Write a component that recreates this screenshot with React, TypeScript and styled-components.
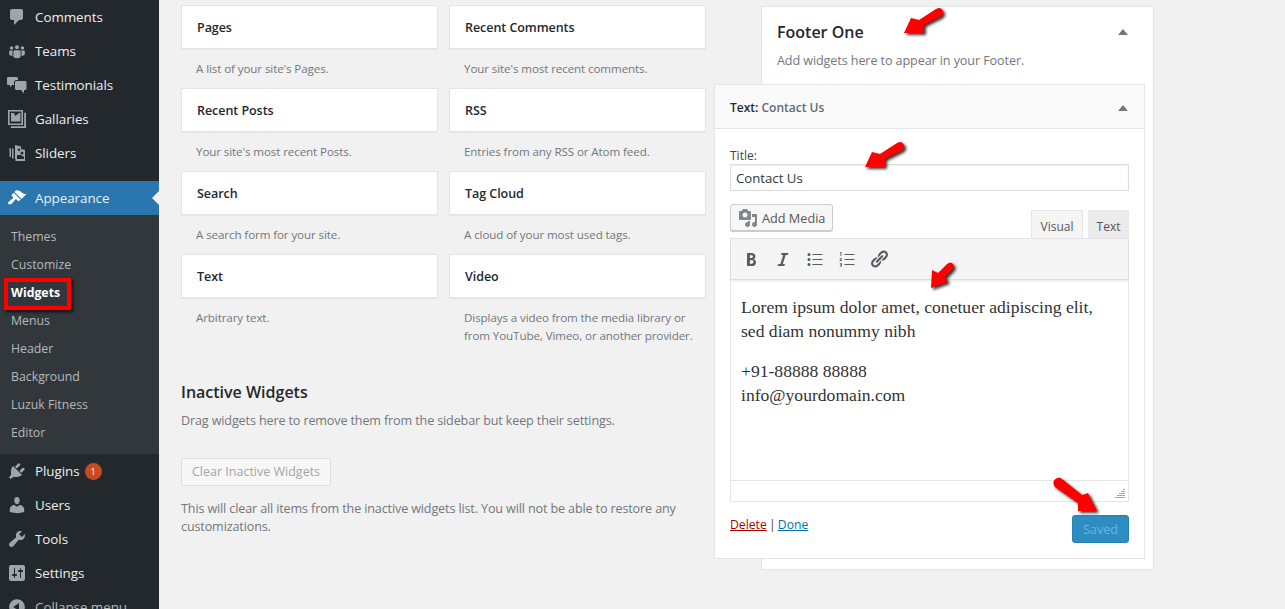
import React from 'react';
import styled, { createGlobalStyle } from 'styled-components';

const GlobalStyle = createGlobalStyle`
    html, body {
        margin: 0;
        padding: 0;
        height: 609px;
        overflow: hidden;
        background: #f1f1f1;
    }
    body {
        font-family: 'Open Sans', sans-serif;
        font-size: 13px;
        line-height: 18px;
        color: #444;
    }
`;

const Page = styled.div`
    position: relative;
    display: flex;
    width: 1285px;
    height: 609px;
    overflow: hidden;
`;

const Sidebar = styled.nav`
    width: 159px;
    flex: none;
    background: #23282d;
    overflow: hidden;
`;

const MenuItem = styled.div<{ $active?: boolean; $dim?: boolean }>`
    position: relative;
    display: flex;
    align-items: center;
    height: 34px;
    padding-left: 7px;
    font-size: 13.4px;
    letter-spacing: -0.05px;
    color: ${(p) => (p.$dim ? '#b4b9be' : '#eee')};
    background: ${(p) => (p.$active ? '#2a76af' : 'transparent')};
    ${(p) =>
        p.$active
            ? `&::after {
        content: '';
        position: absolute;
        right: 0;
        top: 10px;
        border: 7px solid transparent;
        border-right-color: #f1f1f1;
        border-left-width: 0;
    }`
            : ''}
`;

const MenuIcon = styled.svg<{ $light?: boolean }>`
    width: 20px;
    height: 20px;
    flex: none;
    margin-right: 8px;
    fill: ${(p) => (p.$light ? '#fff' : '#a0a5aa')};
    fill-rule: evenodd;
`;

const MenuGap = styled.div`
    height: 11px;
`;

const SubMenu = styled.div`
    background: #32373c;
    padding: 8px 0 7px;
    height: 239px;
    box-sizing: border-box;
`;

const SubItem = styled.div<{ $current?: boolean }>`
    height: 28px;
    line-height: 28px;
    padding-left: 11px;
    font-size: 12.3px;
    color: ${(p) => (p.$current ? '#fff' : '#b4b9be')};
    font-weight: ${(p) => (p.$current ? 700 : 400)};
`;

const Badge = styled.span`
    display: inline-block;
    width: 17px;
    height: 17px;
    line-height: 17px;
    margin-left: 5px;
    border-radius: 50%;
    background: #ca4a1f;
    color: #fff;
    font-size: 9px;
    text-align: center;
`;

const Highlight = styled.div`
    position: absolute;
    left: 4px;
    top: 278px;
    width: 59px;
    height: 24px;
    border: 4px solid #f00;
    box-shadow: 2px 2px 3px rgba(0, 0, 0, 0.7);
`;

const Available = styled.section`
    width: 525px;
    margin-left: 22px;
    padding-top: 5px;
    flex: none;
`;

const WidgetGrid = styled.div`
    display: grid;
    grid-template-columns: 257px 257px;
    column-gap: 11px;
    grid-auto-rows: 83px;
`;

const WidgetTile = styled.div`
    display: flex;
    flex-direction: column;
`;

const TileTitle = styled.div`
    height: 42px;
    line-height: 44px;
    padding-left: 15px;
    background: #fff;
    border: 1px solid #e5e5e5;
    box-shadow: 0 1px 1px rgba(0, 0, 0, 0.04);
    font-size: 12.5px;
    letter-spacing: -0.05px;
    font-weight: 600;
    color: #23282d;
`;

const TileDesc = styled.div`
    margin-top: 11px;
    padding-left: 15px;
    font-size: 11.6px;
    letter-spacing: -0.1px;
    line-height: 18px;
    color: #72777c;
`;

const Heading = styled.h3`
    margin: 43px 0 0;
    font-size: 16px;
    line-height: 24px;
    font-weight: 600;
    color: #23282d;
`;

const Note = styled.p<{ $top: number }>`
    margin: ${(p) => p.$top}px 0 0;
    font-size: 12.6px;
    letter-spacing: -0.14px;
    line-height: 18px;
    color: #72777c;
`;

const ClearButton = styled.div`
    width: 150px;
    height: 28px;
    margin-top: 28px;
    box-sizing: border-box;
    line-height: 26px;
    text-align: center;
    border: 1px solid #ddd;
    border-radius: 2px;
    background: #f7f7f7;
    color: #a0a5aa;
    font-size: 12.5px;
`;

const Sidebars = styled.section`
    width: 393px;
    height: 564px;
    margin: 6px 0 0 55px;
    box-sizing: border-box;
    flex: none;
    background: #fff;
    border: 1px solid #e5e5e5;
`;

const PanelHead = styled.div`
    display: flex;
    justify-content: space-between;
    align-items: center;
    height: 50px;
    padding: 0 25px 0 15px;
`;

const PanelTitle = styled.h2`
    margin: 0;
    font-size: 16px;
    font-weight: 600;
    color: #23282d;
`;

const Caret = styled.span`
    width: 0;
    height: 0;
    border-left: 5px solid transparent;
    border-right: 5px solid transparent;
    border-bottom: 6px solid #72777c;
`;

const PanelDesc = styled.p`
    margin: -5px 0 0;
    padding-left: 15px;
    font-size: 12.6px;
    letter-spacing: -0.1px;
    line-height: 18px;
    color: #72777c;
`;

const OpenWidget = styled.div`
    width: 431px;
    height: 475px;
    margin: 14px 0 0 -48px;
    box-sizing: border-box;
    background: #fff;
    border: 1px solid #e5e5e5;
`;

const WidgetHead = styled.div`
    display: flex;
    justify-content: space-between;
    align-items: center;
    height: 44px;
    padding: 2px 16px 0 15px;
    box-sizing: border-box;
    background: #fafafa;
    border-bottom: 1px solid #e5e5e5;
    font-size: 12px;
    font-weight: 600;
    color: #23282d;
`;

const WidgetName = styled.span`
    color: #606a73;
`;

const WidgetBody = styled.div`
    padding: 18px 15px 0;
`;

const Label = styled.label`
    display: block;
    font-size: 12px;
    line-height: 17px;
    color: #444;
`;

const TitleInput = styled.div`
    height: 27px;
    box-sizing: border-box;
    padding-left: 5px;
    line-height: 27px;
    font-size: 13.2px;
    border: 1px solid #ddd;
    box-shadow: inset 0 1px 2px rgba(0, 0, 0, 0.07);
    color: #32373c;
`;

const EditorTools = styled.div`
    display: flex;
    justify-content: space-between;
    align-items: flex-end;
    margin-top: 13px;
    height: 34px;
`;

const MediaButton = styled.div`
    display: flex;
    align-items: center;
    align-self: flex-start;
    box-sizing: border-box;
    width: 103px;
    height: 27px;
    padding-left: 7px;
    gap: 4px;
    border: 1px solid #ccc;
    border-radius: 3px;
    background: #f7f7f7;
    box-shadow: 0 1px 0 #ccc;
    font-size: 12.7px;
    color: #555;
`;

const MediaIcon = styled.svg`
    width: 20px;
    height: 20px;
    flex: none;
    fill: #82878c;
`;

const Tabs = styled.div`
    display: flex;
    gap: 5px;
`;

const Tab = styled.div<{ $active?: boolean }>`
    position: relative;
    width: ${(p) => (p.$active ? '52px' : '41px')};
    height: 28px;
    box-sizing: border-box;
    line-height: 31px;
    text-align: center;
    font-size: 12px;
    color: #555;
    background: ${(p) => (p.$active ? '#f5f5f5' : '#ebebeb')};
    border: 1px solid ${(p) => (p.$active ? '#e5e5e5' : '#ebebeb')};
    border-bottom: none;
    margin-bottom: ${(p) => (p.$active ? '-1px' : '0')};
`;

const Editor = styled.div`
    border: 1px solid #e5e5e5;
`;

const Toolbar = styled.div`
    display: flex;
    align-items: center;
    gap: 12px;
    height: 40px;
    padding-left: 10px;
    background: #f5f5f5;
    border-bottom: 1px solid #ddd;
    box-shadow: 0 1px 2px rgba(0, 0, 0, 0.1);
`;

const ToolIcon = styled.svg`
    width: 20px;
    height: 20px;
    fill: #555d66;
`;

const EditorBody = styled.div`
    height: 200px;
    box-sizing: border-box;
    padding: 15px 10px 0;
    font-family: 'Liberation Serif', serif;
    font-size: 17.6px;
    line-height: 24px;
    color: #333;
`;

const EditorPara = styled.p`
    margin: 0 0 16px;
`;

const StatusBar = styled.div`
    position: relative;
    height: 20px;
    border-top: 1px solid #e5e5e5;
`;

const Grip = styled.svg`
    position: absolute;
    right: 3px;
    bottom: 3px;
    width: 10px;
    height: 10px;
    stroke: #a0a5aa;
`;

const Actions = styled.div`
    display: flex;
    justify-content: space-between;
    margin-top: 13px;
`;

const LinkRow = styled.div`
    padding-top: 1px;
    font-size: 12.2px;
    word-spacing: -1px;
`;

const DeleteLink = styled.a`
    color: #a00;
    text-decoration: underline;
`;

const DoneLink = styled.a`
    color: #0073aa;
    text-decoration: underline;
`;

const SavedButton = styled.div`
    width: 57px;
    height: 28px;
    box-sizing: border-box;
    line-height: 26px;
    text-align: center;
    background: #2e8cc3;
    border: 1px solid #2a7fb3;
    border-radius: 3px;
    color: #66b5de;
    font-size: 12.7px;
`;

const ArrowSvg = styled.svg<{ $x: number; $y: number }>`
    position: absolute;
    left: ${(p) => p.$x}px;
    top: ${(p) => p.$y}px;
    width: 50px;
    height: 45px;
    overflow: visible;
    fill: #f00;
    filter: drop-shadow(2.5px 2.5px 1.5px rgba(0, 0, 0, 0.8));
`;

const WIDE_ARROW = 'M4 28 L11 13 L19 15 L36 4 Q41 1 43 6 Q44 10 40 12 L24 20 L24 28 Z';

// each arrow sits over the page, so these are canvas positions
const ARROWS = [
    { x: 900, y: 5, d: WIDE_ARROW },
    { x: 861, y: 139, d: WIDE_ARROW },
    { x: 925, y: 258, d: 'M6 30 L7 12 L13 15 L22 6 Q26 3 28 6 Q30 9 27 12 L20 19 L23 24 Z' },
    { x: 1050, y: 472, d: 'M47 39 L28 39 L28 31 L5 15 Q1 9 7 6 Q10 5 12 7 L32 23 L38 21 Z' },
];

const ICONS: Record<string, string> = {
    comments: 'M5 2h9c1.1 0 2 .9 2 2v7c0 1.1-.9 2-2 2h-2l-5 5v-5H5c-1.1 0-2-.9-2-2V4c0-1.1.9-2 2-2z',
    teams: 'M10 4.2c1.2 0 2 .9 2 2s-.8 2-2 2-2-.9-2-2 .8-2 2-2zM4.6 5.2c1 0 1.7.8 1.7 1.7s-.7 1.7-1.7 1.7-1.7-.8-1.7-1.7.7-1.7 1.7-1.7zm10.8 0c1 0 1.7.8 1.7 1.7s-.7 1.7-1.7 1.7-1.7-.8-1.7-1.7.7-1.7 1.7-1.7zM7.6 9.2h4.8c.7 0 1.2.5 1.2 1.2v5c0 .7-1 1.8-3.6 1.8s-3.6-1.1-3.6-1.8v-5c0-.7.5-1.2 1.2-1.2zM3 9.4h3c-.3.4-.5.8-.5 1.3v4.2c-2.2-.1-3.3-1-3.3-1.6v-2.7c0-.7.3-1.2.8-1.2zm11 0h3c.5 0 .8.5.8 1.2v2.7c0 .6-1.1 1.5-3.3 1.6v-4.2c0-.5-.2-.9-.5-1.3z',
    testimonials: 'M1 2h8.5c.8 0 1.5.7 1.5 1.5V5H9.5C8 5 7 6 7 7.5V10H5l-2 2.5V10H1c-.6 0-1-.4-1-1V3c0-.6.4-1 1-1zm8.5 4H18c.8 0 1.5.7 1.5 1.5v6c0 .8-.7 1.5-1.5 1.5h-1v3.5L14 15H9.5C8.7 15 8 14.3 8 13.5v-6C8 6.7 8.7 6 9.5 6z',
    gallery: 'M1 1h15v15H1V1zm1.6 1.6v11.8h11.8V2.6H2.6zM4 4h3l1.4 3L12 4h1.4v8.6H4V4zm13.2-.2H19V19H3.8v-1.8h13.4V3.8z',
    sliders: 'M2.5 5l1.5.6v8.6l-1.5-.6V5zM5 5.2l1.5.6v10L5 15.2v-10zM8 2l6 1.5V6l4 1v11H8.5v-2H8V2zm7 6.5a1.5 1.5 0 1 0 0 3 1.5 1.5 0 0 0 0-3zm-3-3a1.3 1.3 0 1 0 0 2.6 1.3 1.3 0 0 0 0-2.6zM10 12v4h7v-2l-3-2h-4z',
    appearance: 'M14.48 11.06L7.41 3.99l1.5-1.5c.5-.56 2.3-.47 3.51.32 1.21.8 1.43 1.28 2.91 2.1 1.18.64 2.45 1.26 4.45.85zm-.71.71L6.7 4.7 4.93 6.47c-.39.39-.39 1.02 0 1.41l1.06 1.06c.39.39.39 1.03 0 1.42-.6.6-1.43 1.11-2.21 1.69-.35.26-.7.53-1.01.84C1.43 13.23.4 14.91 1.53 16.04c1.13 1.13 2.8.09 4.14-1.24.31-.31.58-.66.85-1.01.57-.78 1.08-1.61 1.69-2.21.39-.39 1.02-.39 1.41 0l1.06 1.06c.39.39 1.02.39 1.41 0z',
    plugins: 'M13.11 4.36L9.87 7.6 8 5.73l3.24-3.24c.35-.34 1.05-.2 1.56.32.52.51.66 1.21.31 1.55zm-8 1.77l.91-1.12 9.01 9.01-1.19.84c-.71.71-2.63 1.16-3.82 1.16H6.14L4.9 17.26c-.59.59-1.54.59-2.12 0-.59-.58-.59-1.53 0-2.12l1.24-1.24v-3.88c0-1.13.4-3.19 1.09-3.89zm7.26 3.97l3.24-3.24c.34-.35 1.04-.21 1.55.31.52.51.66 1.21.31 1.55l-3.24 3.25z',
    users: 'M10 9.25c-2.27 0-2.73-3.44-2.73-3.44C7 4.02 7.82 2 9.97 2c2.16 0 2.98 2.02 2.71 3.81 0 0-.41 3.44-2.68 3.44zm0 2.57L12.72 10c2.39 0 4.52 2.33 4.52 4.53v2.49s-3.65 1.13-7.24 1.13c-3.65 0-7.24-1.13-7.24-1.13v-2.49c0-2.25 1.94-4.48 4.47-4.48z',
    tools: 'M16.68 9.77c-1.34 1.34-3.3 1.67-4.95.99l-5.41 6.52c-.99.99-2.59.99-3.58 0s-.99-2.59 0-3.57l6.52-5.42c-.68-1.65-.35-3.61.99-4.95 1.28-1.28 3.12-1.62 4.72-1.06l-2.89 2.89 2.82 2.82 2.86-2.87c.53 1.58.18 3.39-1.08 4.65z',
    settings: 'M18 16V4c0-1.1-.9-2-2-2H4c-1.1 0-2 .9-2 2v12c0 1.1.9 2 2 2h12c1.1 0 2-.9 2-2zM8 11h1c.55 0 1 .45 1 1s-.45 1-1 1H8v1.5c0 .28-.22.5-.5.5s-.5-.22-.5-.5V13H6c-.55 0-1-.45-1-1s.45-1 1-1h1V5.5c0-.28.22-.5.5-.5s.5.22.5.5V11zm5-2h-1c-.55 0-1-.45-1-1s.45-1 1-1h1V5.5c0-.28.22-.5.5-.5s.5.22.5.5V7h1c.55 0 1 .45 1 1s-.45 1-1 1h-1v5.5c0 .28-.22.5-.5.5s-.5-.22-.5-.5V9z',
    collapse: 'M10 2.16c4.33 0 7.84 3.51 7.84 7.84s-3.51 7.84-7.84 7.84S2.16 14.33 2.16 10 5.71 2.16 10 2.16zm2 11.72V6.12L6.18 9.97z',
};

const TOOL_ICONS: Record<string, string> = {
    bold: 'M6 4v13h4.77c2.43 0 4.23-1.1 4.23-3.6 0-1.7-.98-2.7-2.5-3.1 1.1-.4 1.9-1.4 1.9-2.8C14.4 5 12.8 4 10.5 4H6zm2.9 2.2h1.4c1.1 0 1.6.5 1.6 1.4 0 .9-.6 1.5-1.7 1.5H8.9V6.2zm0 5h1.8c1.2 0 1.8.6 1.8 1.6s-.7 1.9-1.9 1.9H8.9v-3.5z',
    italic: 'M14.78 6h-2.13l-2.8 9h2.12l-.62 2H4.6l.62-2h2.14l2.8-9H8.03l.62-2h6.75z',
    bullets: 'M4 4a1.5 1.5 0 1 1 0 3 1.5 1.5 0 0 1 0-3zm0 5a1.5 1.5 0 1 1 0 3 1.5 1.5 0 0 1 0-3zm0 5a1.5 1.5 0 1 1 0 3 1.5 1.5 0 0 1 0-3zM7.5 5h10v1h-10V5zm0 5h10v1h-10v-1zm0 5h10v1h-10v-1z',
    numbers: 'M7.5 5h10v1h-10V5zm0 5h10v1h-10v-1zm0 5h10v1h-10v-1zM3 3h1.4v4H3.5V4H3V3zm-.3 6.2h2.2v.8l-1.2 1.3h1.3v.8H2.6v-.8l1.3-1.4H2.7v-.7zm0 5h2.2v3.4H2.7v-.8h1.3v-.6H3v-.6h1v-.6H2.7v-.8z',
    link: 'M17.74 2.76c1.68 1.69 1.68 4.41 0 6.1l-1.53 1.52c-1.12 1.12-2.7 1.47-4.14 1.09l2.62-2.61.76-.77.76-.76c.84-.84.84-2.2 0-3.04-.84-.85-2.2-.85-3.04 0l-.77.76-3.38 3.38c-.37-1.44-.02-3.02 1.1-4.14l1.52-1.53c1.69-1.68 4.42-1.68 6.1 0zM8.59 13.43l5.34-5.34c.42-.42.42-1.1 0-1.52-.44-.43-1.13-.39-1.53 0l-5.33 5.34c-.42.42-.42 1.1 0 1.52.44.43 1.13.39 1.52 0zm-.76 2.29l4.14-4.15c.38 1.44.03 3.02-1.09 4.14l-1.52 1.53c-1.69 1.68-4.41 1.68-6.1 0-1.68-1.68-1.68-4.42 0-6.1l1.53-1.52c1.12-1.12 2.7-1.47 4.14-1.1l-4.14 4.15c-.85.84-.85 2.2 0 3.05.84.84 2.2.84 3.04 0z',
};

const TOP_ITEMS = [
    { label: 'Comments', icon: 'comments' },
    { label: 'Teams', icon: 'teams' },
    { label: 'Testimonials', icon: 'testimonials' },
    { label: 'Gallaries', icon: 'gallery' },
    { label: 'Sliders', icon: 'sliders' },
];

const SUB_ITEMS = ['Themes', 'Customize', 'Widgets', 'Menus', 'Header', 'Background', 'Luzuk Fitness', 'Editor'];

const BOTTOM_ITEMS = [
    { label: 'Users', icon: 'users' },
    { label: 'Tools', icon: 'tools' },
    { label: 'Settings', icon: 'settings' },
];

const WIDGETS = [
    { title: 'Pages', desc: "A list of your site's Pages." },
    { title: 'Recent Comments', desc: "Your site's most recent comments." },
    { title: 'Recent Posts', desc: "Your site's most recent Posts." },
    { title: 'RSS', desc: 'Entries from any RSS or Atom feed.' },
    { title: 'Search', desc: 'A search form for your site.' },
    { title: 'Tag Cloud', desc: 'A cloud of your most used tags.' },
    { title: 'Text', desc: 'Arbitrary text.' },
    { title: 'Video', desc: 'Displays a video from the media library or from YouTube, Vimeo, or another provider.' },
];

const Icon = ({ name, light }: { name: string; light?: boolean }) => (
    <MenuIcon $light={light} viewBox="0 0 20 20">
        <path d={ICONS[name]} />
    </MenuIcon>
);

const Tool = ({ name }: { name: string }) => (
    <ToolIcon viewBox="0 0 20 20">
        <path d={TOOL_ICONS[name]} />
    </ToolIcon>
);

export default function App() {
    return (
        <Page>
            <GlobalStyle />
            <Sidebar>
                {TOP_ITEMS.map((item) => (
                    <MenuItem key={item.label}>
                        <Icon name={item.icon} />
                        {item.label}
                    </MenuItem>
                ))}
                <MenuGap />
                <MenuItem $active>
                    <Icon name="appearance" light />
                    Appearance
                </MenuItem>
                <SubMenu>
                    {SUB_ITEMS.map((item) => (
                        <SubItem key={item} $current={item === 'Widgets'}>
                            {item}
                        </SubItem>
                    ))}
                </SubMenu>
                <MenuItem>
                    <Icon name="plugins" />
                    Plugins
                    <Badge>1</Badge>
                </MenuItem>
                {BOTTOM_ITEMS.map((item) => (
                    <MenuItem key={item.label}>
                        <Icon name={item.icon} />
                        {item.label}
                    </MenuItem>
                ))}
                <MenuItem $dim>
                    <Icon name="collapse" />
                    Collapse menu
                </MenuItem>
            </Sidebar>

            <Available>
                <WidgetGrid>
                    {WIDGETS.map((widget) => (
                        <WidgetTile key={widget.title}>
                            <TileTitle>{widget.title}</TileTitle>
                            <TileDesc>{widget.desc}</TileDesc>
                        </WidgetTile>
                    ))}
                </WidgetGrid>
                <Heading>Inactive Widgets</Heading>
                <Note $top={8}>Drag widgets here to remove them from the sidebar but keep their settings.</Note>
                <ClearButton>Clear Inactive Widgets</ClearButton>
                <Note $top={14}>
                    This will clear all items from the inactive widgets list. You will not be able to restore any
                    customizations.
                </Note>
            </Available>

            <Sidebars>
                <PanelHead>
                    <PanelTitle>Footer One</PanelTitle>
                    <Caret />
                </PanelHead>
                <PanelDesc>Add widgets here to appear in your Footer.</PanelDesc>
                <OpenWidget>
                    <WidgetHead>
                        <span>
                            Text: <WidgetName>Contact Us</WidgetName>
                        </span>
                        <Caret />
                    </WidgetHead>
                    <WidgetBody>
                        <Label>Title:</Label>
                        <TitleInput>Contact Us</TitleInput>
                        <EditorTools>
                            <MediaButton>
                                <MediaIcon viewBox="0 0 20 20">
                                    <path d="M13 11V4c0-.55-.45-1-1-1h-1.67L9 1H5L3.67 3H2c-.55 0-1 .45-1 1v7c0 .55.45 1 1 1h10c.55 0 1-.45 1-1zM7 4.5c1.38 0 2.5 1.12 2.5 2.5S8.38 9.5 7 9.5 4.5 8.38 4.5 7 5.62 4.5 7 4.5zM14 6h5v10.5c0 1.38-1.12 2.5-2.5 2.5S14 17.88 14 16.5s1.12-2.5 2.5-2.5c.17 0 .34.02.5.05V9h-3V6zm-4 8.05V13h2v3.5c0 1.38-1.12 2.5-2.5 2.5S7 17.88 7 16.5 8.12 14 9.5 14c.17 0 .34.02.5.05z" />
                                </MediaIcon>
                                Add Media
                            </MediaButton>
                            <Tabs>
                                <Tab $active>Visual</Tab>
                                <Tab>Text</Tab>
                            </Tabs>
                        </EditorTools>
                        <Editor>
                            <Toolbar>
                                <Tool name="bold" />
                                <Tool name="italic" />
                                <Tool name="bullets" />
                                <Tool name="numbers" />
                                <Tool name="link" />
                            </Toolbar>
                            <EditorBody>
                                <EditorPara>
                                    Lorem ipsum dolor amet, conetuer adipiscing elit,
                                    <br />
                                    sed diam nonummy nibh
                                </EditorPara>
                                <EditorPara>
                                    +91-88888 88888
                                    <br />
                                    info@yourdomain.com
                                </EditorPara>
                            </EditorBody>
                            <StatusBar>
                                <Grip viewBox="0 0 10 10">
                                    <path d="M8 1.5h2M6 3.5h4M4 5.5h6M2 7.5h8M0 9.5h10" />
                                </Grip>
                            </StatusBar>
                        </Editor>
                        <Actions>
                            <LinkRow>
                                <DeleteLink>Delete</DeleteLink> | <DoneLink>Done</DoneLink>
                            </LinkRow>
                            <SavedButton>Saved</SavedButton>
                        </Actions>
                    </WidgetBody>
                </OpenWidget>
            </Sidebars>

            <Highlight />
            {ARROWS.map((arrow) => (
                <ArrowSvg key={arrow.x} $x={arrow.x} $y={arrow.y} viewBox="0 0 50 45">
                    <path d={arrow.d} />
                </ArrowSvg>
            ))}
        </Page>
    );
}
